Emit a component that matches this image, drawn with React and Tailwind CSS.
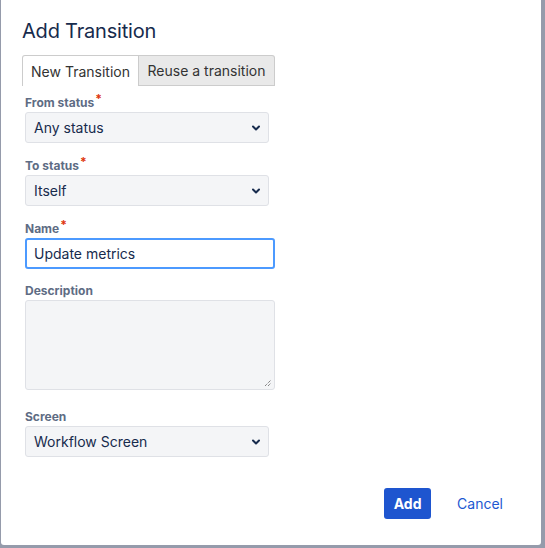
import React from "react";

const Chevron = () => (
  <svg width="10" height="10" viewBox="0 0 10 10" className="shrink-0">
    <path d="M2 3.5 L5 6.5 L8 3.5" fill="none" stroke="#172b4d" strokeWidth="2" strokeLinecap="round" strokeLinejoin="round" />
  </svg>
);

const Label = ({ children, required }) => (
  <div className="text-[12px] font-bold text-[#5e6c84] leading-[16px] mb-[1px]">
    {children}
    {required && <span className="text-[#de350b] relative top-[-4px] ml-[1px]">*</span>}
  </div>
);

const Select = ({ value }) => (
  <div className="w-[244px] h-[31px] bg-[#f4f5f7] border border-[#dfe1e6] rounded-[3px] flex items-center justify-between pl-[8px] pr-[7px] text-[14px] text-[#172b4d]">
    <span>{value}</span>
    <Chevron />
  </div>
);

export default function App() {
  return (
    <div className="w-[545px] h-[548px] bg-[#959bab] pl-[1px] pr-[4px] pb-[3px]" style={{ fontFamily: "Inter, 'Liberation Sans', sans-serif" }}>
      <div className="w-full h-full bg-white rounded-b-[3px] pl-[21px] pt-[17px] flex flex-col">
        <h1 className="text-[20px] text-[#172b4d] leading-[28px] tracking-[-0.2px]">Add Transition</h1>
        <div className="flex mt-[10px] h-[31px] text-[14px] text-[#333333]">
          <div className="w-[117px] border border-[#cccccc] border-b-0 rounded-tl-[3px] bg-white flex items-center justify-center">New Transition</div>
          <div className="w-[136px] border border-l-0 border-[#cccccc] rounded-tr-[3px] bg-[#e9e9e9] flex items-center justify-center">Reuse a transition</div>
        </div>
        <div className="pl-[3px] pt-[9px] flex flex-col">
          <Label required>From status</Label>
          <Select value="Any status" />
          <div className="mt-[15px]"><Label required>To status</Label></div>
          <Select value="Itself" />
          <div className="mt-[15px]"><Label required>Name</Label></div>
          <div className="w-[250px] h-[31px] border-2 border-[#4c9aff] rounded-[3px] flex items-center pl-[7px] text-[14px] text-[#172b4d] bg-white">Update metrics</div>
          <div className="mt-[14px]"><Label>Description</Label></div>
          <div className="relative w-[250px] h-[90px] bg-[#f4f5f7] border border-[#dfe1e6] rounded-[3px]">
            <svg width="8" height="8" viewBox="0 0 8 8" className="absolute right-[2px] bottom-[2px]">
              <path d="M1 7 L7 1 M4 7 L7 4" stroke="#555" strokeWidth="1" strokeDasharray="1 1" />
            </svg>
          </div>
          <div className="mt-[19px]"><Label>Screen</Label></div>
          <Select value="Workflow Screen" />
        </div>
        <div className="flex items-center justify-end mt-[31px] pr-[38px] gap-[26px]">
          <button className="h-[31px] w-[47px] bg-[#1e55cf] rounded-[3px] text-white text-[14px] font-bold">Add</button>
          <span className="text-[14px] text-[#1d58d1]">Cancel</span>
        </div>
      </div>
    </div>
  );
}
